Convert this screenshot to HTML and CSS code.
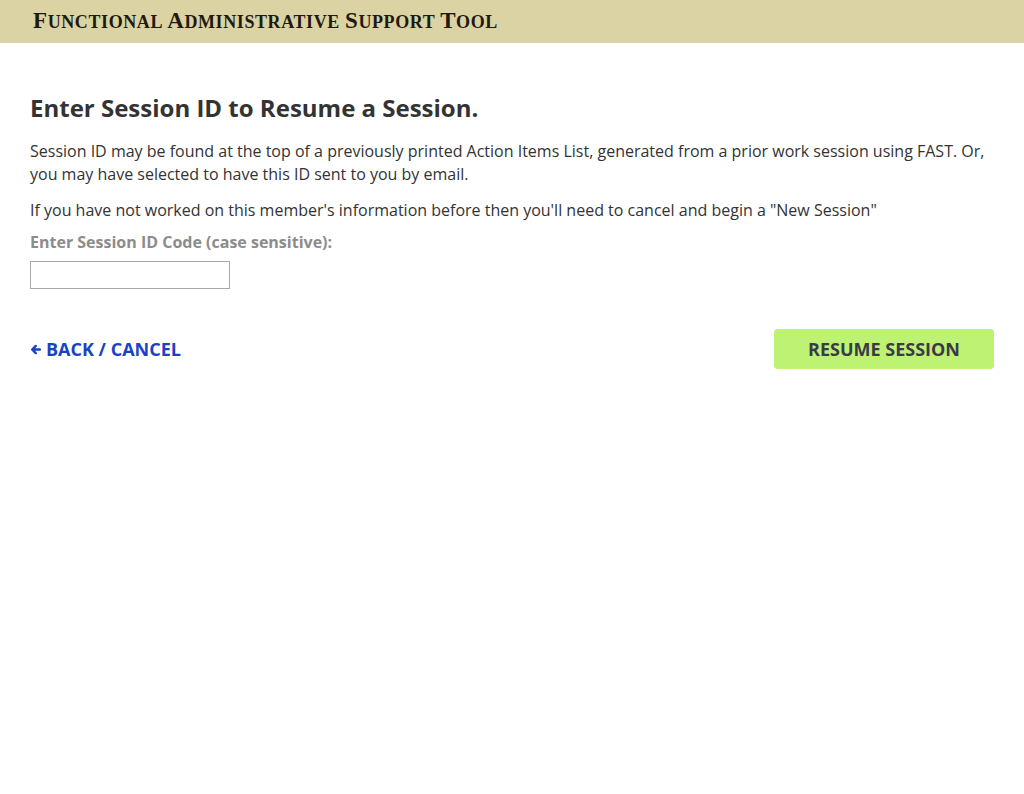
FILE: index.html
```html
<!DOCTYPE html>
<html lang="en">
<head>
<meta charset="utf-8">
<title>FAST - Resume Session</title>
<link rel="stylesheet" href="styles.css">
</head>
<body>
<header class="topbar">
  <div class="brand"><span class="cap">F</span>UNCTIONAL <span class="cap">A</span>DMINISTRATIVE <span class="cap">S</span>UPPORT <span class="cap">T</span>OOL</div>
</header>
<main class="content">
  <h1 class="title">Enter Session ID to Resume a Session.</h1>
  <p class="text">Session ID may be found at the top of a previously printed Action Items List, generated from a prior work session using FAST. Or, you may have selected to have this ID sent to you by email.</p>
  <p class="text">If you have not worked on this member's information before then you'll need to cancel and begin a "New Session"</p>
  <label class="label" for="sid">Enter Session ID Code (case sensitive):</label>
  <input class="field" id="sid" type="text">
  <div class="actions">
    <a class="back" href="#"><svg class="arrow" viewBox="0 0 10 10" width="11" height="11"><path d="M9 5H2.2M5.2 1.8L2 5L5.2 8.2" fill="none" stroke="currentColor" stroke-width="2.2" stroke-linecap="round" stroke-linejoin="round"/></svg>BACK / CANCEL</a>
    <button class="resume" type="button">RESUME SESSION</button>
  </div>
</main>
</body>
</html>
```
FILE: styles.css
```css
html, body { margin: 0; padding: 0; background: #fff; }
body { font-family: "Open Sans", "Liberation Sans", sans-serif; color: #333; }
.topbar {
  height: 43px;
  background: #dbd3a4;
  display: flex;
  align-items: center;
  padding-left: 33px;
}
.brand {
  font-family: "Liberation Serif", "DejaVu Serif", serif;
  font-weight: bold;
  font-size: 18px;
  letter-spacing: 0.6px;
  color: #1e1a10;
  line-height: 24px;
  margin-top: 0;
}
.cap { font-size: 23px; }
.content { padding: 0 30px; }
.title {
  font-size: 24px;
  font-weight: bold;
  color: #333;
  margin: 49px 0 16px;
  line-height: 32px;
}
.text {
  font-size: 16px;
  line-height: 23px;
  margin: 0 0 13px;
  color: #333;
}
.label {
  display: block;
  font-size: 16px;
  font-weight: bold;
  color: #8c8c8c;
  line-height: 22px;
  margin-top: -4px;
  margin-bottom: 8px;
}
.field {
  display: block;
  box-sizing: border-box;
  width: 200px;
  height: 28px;
  border: 1px solid #aaa;
  margin: 0;
  padding: 2px 6px;
  font: 15px "Open Sans", sans-serif;
}
.actions {
  display: flex;
  justify-content: space-between;
  align-items: center;
  margin-top: 40px;
}
.back {
  color: #1a42c4;
  font-size: 18px;
  font-weight: bold;
  text-decoration: none;
  display: flex;
  align-items: center;
  gap: 5px;
}
.arrow { display: block; }
.resume {
  width: 220px;
  height: 40px;
  background: #bdf273;
  border: none;
  border-radius: 4px;
  font-family: "Open Sans", sans-serif;
  font-weight: bold;
  font-size: 18px;
  color: #3a3a48;
  cursor: pointer;
}
```
